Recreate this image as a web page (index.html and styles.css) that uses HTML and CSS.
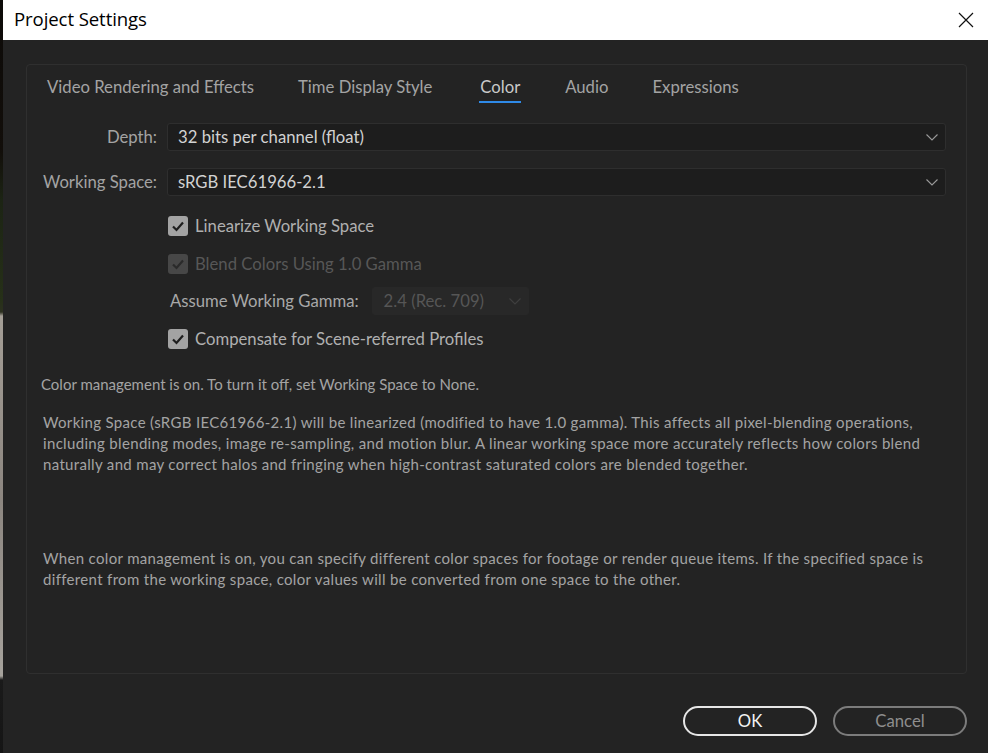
FILE: index.html
```html
<!DOCTYPE html>
<html>
<head>
<meta charset="utf-8">
<link rel="stylesheet" href="styles.css">
</head>
<body>
<div class="strip"></div>
<div class="window">
  <div class="titlebar">
    <span class="title">Project Settings</span>
    <svg class="close" width="16" height="16" viewBox="0 0 16 16"><path d="M1 1 L15 15 M15 1 L1 15" stroke="#111" stroke-width="1.2" fill="none"/></svg>
  </div>
  <div class="body">
    <div class="panel">
      <div class="tabs">
        <span class="tab">Video Rendering and Effects</span>
        <span class="tab">Time Display Style</span>
        <span class="tab active">Color</span>
        <span class="tab">Audio</span>
        <span class="tab">Expressions</span>
      </div>
      <div class="form">
        <div class="row">
          <span class="label">Depth:</span>
          <div class="select"><span>32 bits per channel (float)</span>
            <svg class="chev" width="12" height="7" viewBox="0 0 12 7"><path d="M0.5 0.5 L6 6 L11.5 0.5" stroke="#9a9a9a" stroke-width="1.1" fill="none"/></svg></div>
        </div>
        <div class="row">
          <span class="label">Working Space:</span>
          <div class="select"><span>sRGB IEC61966-2.1</span>
            <svg class="chev" width="12" height="7" viewBox="0 0 12 7"><path d="M0.5 0.5 L6 6 L11.5 0.5" stroke="#9a9a9a" stroke-width="1.1" fill="none"/></svg></div>
        </div>
        <div class="options">
          <div class="check">
            <span class="box"><svg width="14" height="12" viewBox="0 0 14 12"><path d="M2 6.5 L5.5 10 L12 2.5" stroke="#1e1e1e" stroke-width="2.2" fill="none"/></svg></span>
            <span>Linearize Working Space</span>
          </div>
          <div class="check disabled">
            <span class="box"><svg width="14" height="12" viewBox="0 0 14 12"><path d="M2 6.5 L5.5 10 L12 2.5" stroke="#2a2a2a" stroke-width="2.2" fill="none"/></svg></span>
            <span>Blend Colors Using 1.0 Gamma</span>
          </div>
          <div class="gamma">
            <span class="glabel">Assume Working Gamma:</span>
            <div class="select small disabled"><span>2.4 (Rec. 709)</span>
              <svg class="chev" width="12" height="7" viewBox="0 0 12 7"><path d="M0.5 0.5 L6 6 L11.5 0.5" stroke="#3f3f3f" stroke-width="1.1" fill="none"/></svg></div>
          </div>
          <div class="check">
            <span class="box"><svg width="14" height="12" viewBox="0 0 14 12"><path d="M2 6.5 L5.5 10 L12 2.5" stroke="#1e1e1e" stroke-width="2.2" fill="none"/></svg></span>
            <span>Compensate for Scene-referred Profiles</span>
          </div>
        </div>
      </div>
      <p class="note first">Color management is on. To turn it off, set Working Space to None.</p>
      <p class="note second">Working Space (sRGB IEC61966-2.1) will be linearized (modified to have 1.0 gamma). This affects all pixel-blending operations, including blending modes, image re-sampling, and motion blur. A linear working space more accurately reflects how colors blend naturally and may correct halos and fringing when high-contrast saturated colors are blended together.</p>
      <p class="note third">When color management is on, you can specify different color spaces for footage or render queue items. If the specified space is different from the working space, color values will be converted from one space to the other.</p>
    </div>
    <div class="footer">
      <button class="btn ok">OK</button>
      <button class="btn cancel">Cancel</button>
    </div>
  </div>
</div>
</body>
</html>
```
FILE: styles.css
```css
html, body {
  margin: 0;
  padding: 0;
}
body {
  width: 988px;
  height: 753px;
  display: flex;
  overflow: hidden;
  font-family: Lato, "Noto Sans", sans-serif;
  background: #232323;
}
.strip {
  width: 3px;
  flex: none;
  background: linear-gradient(to bottom, #0c0a08 0px, #120e0a 150px, #1c2414 200px, #263018 300px, #2c3020 312px, #a49e96 316px, #8c8680 500px, #a6a29c 676px, #1a1a1a 680px, #151515 753px);
}
.window {
  flex: 1;
  display: flex;
  flex-direction: column;
}
.titlebar {
  height: 40px;
  box-sizing: border-box;
  flex: none;
  background: #ffffff;
  display: flex;
  align-items: center;
  justify-content: space-between;
  padding: 0 14px 3px 11px;
}
.title {
  font-family: "Open Sans", "Noto Sans", sans-serif;
  font-size: 18.6px;
  color: #000;
  letter-spacing: -0.1px;
}
.close {
  display: block;
  margin-top: 2px;
}
.body {
  flex: 1;
  display: flex;
  flex-direction: column;
  padding: 24px 21px 0 23px;
  background: #232323;
}
.panel {
  height: 608px;
  border: 1px solid #2f2f2f;
  border-radius: 4px;
  display: flex;
  flex-direction: column;
}
.tabs {
  display: flex;
  gap: 44px;
  padding: 11px 0 0 20px;
}
.tab {
  font-size: 16.7px;
  color: #a3a3a3;
  line-height: 22px;
  padding-bottom: 3px;
  border-bottom: 2px solid transparent;
}
.tab.active {
  color: #c9c9c9;
  border-bottom-color: #2f8ae8;
  margin-left: 3px;
  padding: 0 1px 3px;
}
.form {
  display: flex;
  flex-direction: column;
  padding: 20px 20px 0 0;
  gap: 17px;
}
.row {
  display: flex;
  align-items: center;
}
.label {
  width: 130px;
  text-align: right;
  padding-right: 10px;
  flex: none;
  font-size: 16.7px;
  color: #a3a3a3;
}
.select {
  flex: 1;
  height: 26px;
  border: 1px solid #2e2e2e;
  border-radius: 3px;
  background: #1d1d1d;
  display: flex;
  align-items: center;
  justify-content: space-between;
  padding: 0 7px 0 10px;
  font-size: 16.7px;
  color: #d2d2d2;
}
.select.small {
  flex: none;
  width: 137px;
  background: #282828;
  border-color: #282828;
  color: #565656;
  padding-left: 11px;
}
.options {
  display: flex;
  flex-direction: column;
  padding-left: 141px;
  margin-top: -6px;
}
.check {
  display: flex;
  align-items: center;
  gap: 7px;
  height: 38px;
  font-size: 16.7px;
  color: #b0b0b0;
}
.check .box {
  width: 20px;
  height: 20px;
  border-radius: 3px;
  background: #a3a3a3;
  display: flex;
  align-items: center;
  justify-content: center;
  flex: none;
}
.check.disabled {
  color: #575757;
}
.check.disabled .box {
  background: #474747;
}
.gamma {
  display: flex;
  align-items: center;
  height: 36px;
  padding-left: 2px;
  gap: 13px;
}
.glabel {
  font-size: 16.7px;
  color: #a8a8a8;
}
.gamma + .check {
  height: 40px;
}
.note {
  margin: 0;
  font-size: 15px;
  line-height: 21px;
  color: #a3a3a3;
  padding-right: 20px;
}
.note.first {
  margin-top: 15px;
  padding-left: 14px;
}
.note.second {
  margin-top: 17px;
  padding-left: 16px;
  letter-spacing: 0.33px;
}
.note.third {
  margin-top: 73px;
  padding-left: 16px;
  letter-spacing: 0.33px;
}
.footer {
  display: flex;
  justify-content: flex-end;
  gap: 16px;
  padding-top: 32px;
}
.btn {
  width: 134px;
  height: 30px;
  border-radius: 15px;
  background: transparent;
  font-family: Lato, "Noto Sans", sans-serif;
  font-size: 16.7px;
  padding: 0;
}
.btn.ok {
  border: 2px solid #e6e6e6;
  color: #f2f2f2;
}
.btn.cancel {
  border: 2px solid #7c7c7c;
  color: #8e8e8e;
}
```
